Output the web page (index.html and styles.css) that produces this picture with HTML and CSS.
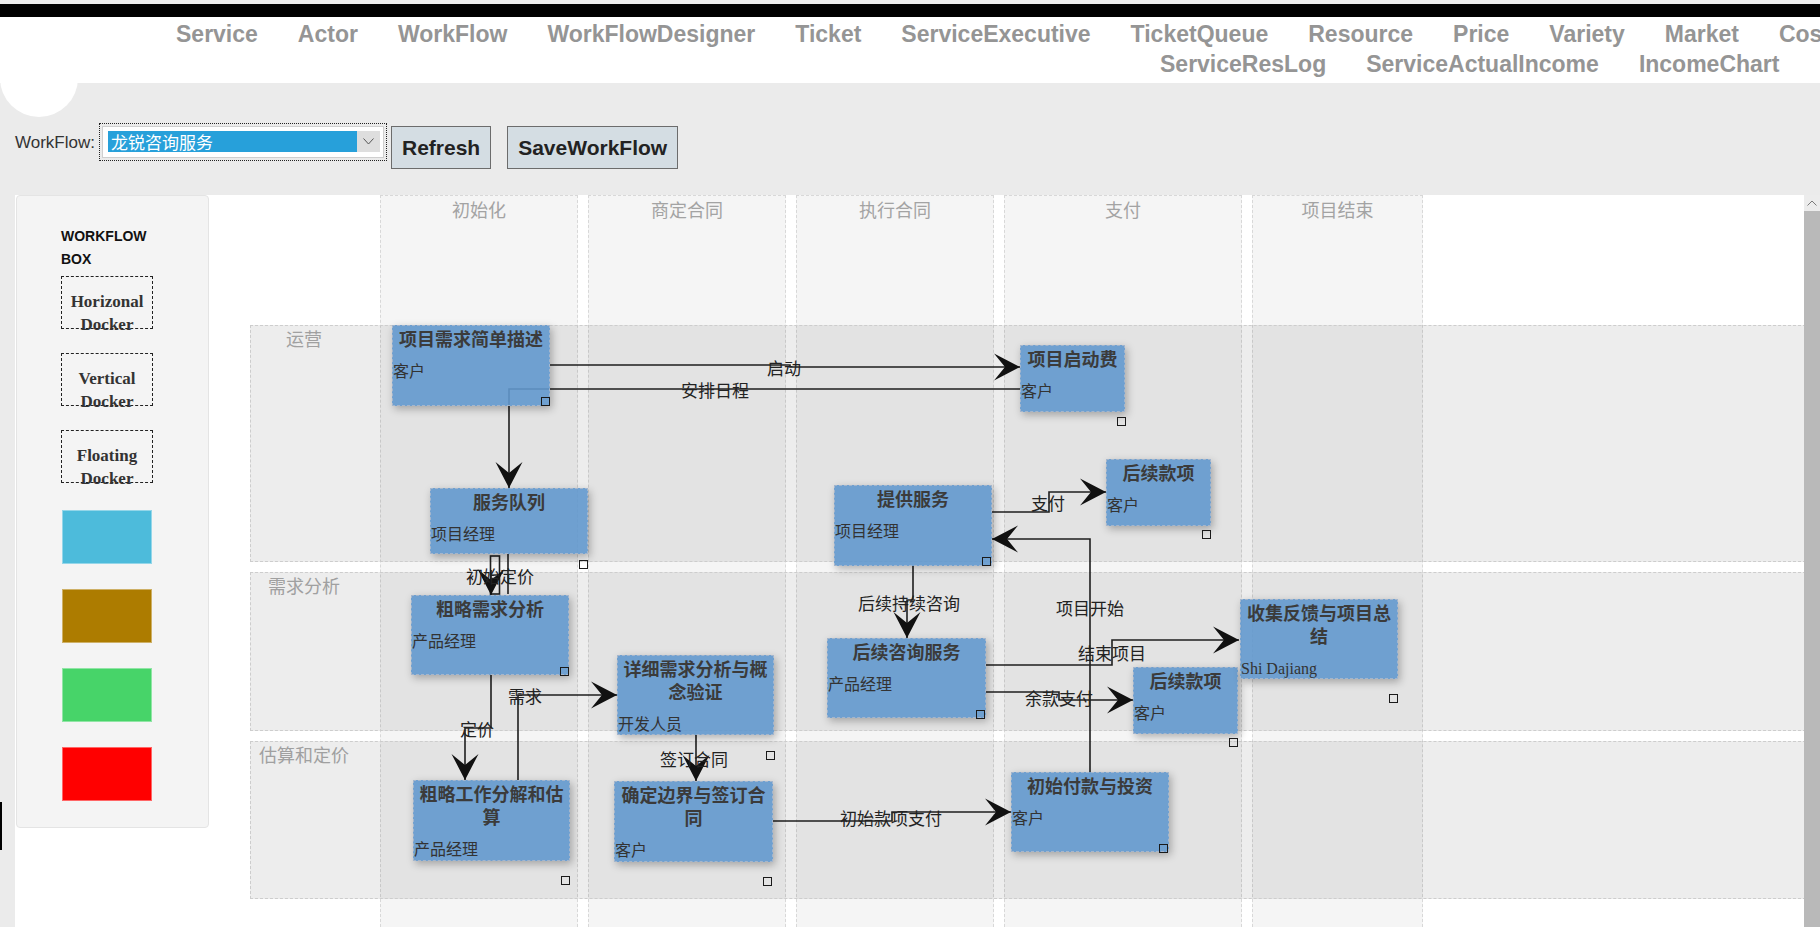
FILE: index.html
```html
<!DOCTYPE html>
<html lang="zh-CN">
<head>
<meta charset="utf-8">
<title>WorkFlowDesigner</title>
<link rel="stylesheet" href="styles.css">
</head>
<body>
<div class="topstrip"></div>
<div class="blackbar"></div>
<nav class="nav">
  <ul class="nav-row row1">
    <li>Service</li><li>Actor</li><li>WorkFlow</li><li>WorkFlowDesigner</li><li>Ticket</li><li>ServiceExecutive</li><li>TicketQueue</li><li>Resource</li><li>Price</li><li>Variety</li><li>Market</li><li>Cost</li><li>Report</li>
  </ul>
  <ul class="nav-row row2">
    <li>ServiceResLog</li><li>ServiceActualIncome</li><li>IncomeChart</li><li>Logout</li>
  </ul>
</nav>
<div class="avatar"></div>
<div class="toolbar">
  <label class="wf-label">WorkFlow:</label>
  <div class="select">
    <div class="select-inner">
      <span class="select-value">龙锐咨询服务</span>
      <span class="select-arrow"><svg width="11" height="7" viewBox="0 0 11 7"><polyline points="0.5,0.5 5.5,6 10.5,0.5" fill="none" stroke="#555" stroke-width="1"/></svg></span>
    </div>
  </div>
  <button class="btn btn-refresh">Refresh</button>
  <button class="btn btn-save">SaveWorkFlow</button>
</div>
<div class="main">
  <div class="left-strip"><div class="sliver"></div></div>
  <div class="workspace">
    <aside class="panel">
      <div class="panel-title">Workflow Box</div>
      <div class="dock dock-first">Horizonal Docker</div>
      <div class="dock">Vertical Docker</div>
      <div class="dock">Floating Docker</div>
      <div class="swatch swatch-first sw-blue"></div>
      <div class="swatch sw-brown"></div>
      <div class="swatch sw-green"></div>
      <div class="swatch sw-red"></div>
    </aside>
    <div class="canvas">
      <div class="columns">
        <div class="col col-a">初始化</div>
        <div class="col col-a">商定合同</div>
        <div class="col col-a">执行合同</div>
        <div class="col col-b">支付</div>
        <div class="col col-c">项目结束</div>
      </div>
      <div class="lanes">
        <div class="lane lane-1"><div class="lane-label">运营</div></div>
        <div class="lane lane-2"><div class="lane-label">需求分析</div></div>
        <div class="lane lane-3"><div class="lane-label">估算和定价</div></div>
      </div>
      <svg class="links" width="1594" height="732">
        <g class="ln">
          <polyline points="340,170 580,170 580,172 810,172"/>
          <polyline points="810,194 299,194 299,293"/>
          <polyline points="298,359 298,399"/>
          <rect x="280.5" y="361" width="9" height="38"/>
          <polyline points="281,375 281,400"/>
          <polyline points="281,480 281,533 255,533 255,585"/>
          <polyline points="308,585 308,500 407,500"/>
          <polyline points="486,540 486,586"/>
          <polyline points="563,626 682,626 682,617 801,617"/>
          <polyline points="782,317 839,317 839,297 896,297"/>
          <polyline points="880,577 880,344 782,344"/>
          <polyline points="703,371 703,405 697,405 697,443"/>
          <polyline points="776,470 902,470 902,445 1029,445"/>
          <polyline points="776,497 849,497 849,505 923,505"/>
        </g>
        <g class="ah">
          <path d="M0 0 L-26 -13.5 L-15 0 L-26 13.5 Z" transform="translate(810 172)"/>
          <path d="M0 0 L-26 -13.5 L-15 0 L-26 13.5 Z" transform="translate(299 293) rotate(90)"/>
          <path d="M0 0 L-26 -13.5 L-15 0 L-26 13.5 Z" transform="translate(281 400) rotate(90)"/>
          <path d="M0 0 L-26 -13.5 L-15 0 L-26 13.5 Z" transform="translate(255 585) rotate(90)"/>
          <path d="M0 0 L-26 -13.5 L-15 0 L-26 13.5 Z" transform="translate(407 500)"/>
          <path d="M0 0 L-26 -13.5 L-15 0 L-26 13.5 Z" transform="translate(486 586) rotate(90)"/>
          <path d="M0 0 L-26 -13.5 L-15 0 L-26 13.5 Z" transform="translate(801 617)"/>
          <path d="M0 0 L-26 -13.5 L-15 0 L-26 13.5 Z" transform="translate(896 297)"/>
          <path d="M0 0 L-26 -13.5 L-15 0 L-26 13.5 Z" transform="translate(782 344) rotate(180)"/>
          <path d="M0 0 L-26 -13.5 L-15 0 L-26 13.5 Z" transform="translate(697 443) rotate(90)"/>
          <path d="M0 0 L-26 -13.5 L-15 0 L-26 13.5 Z" transform="translate(1029 445)"/>
          <path d="M0 0 L-26 -13.5 L-15 0 L-26 13.5 Z" transform="translate(923 505)"/>
        </g>
        <g class="lbl">
          <text x="574" y="172">启动</text>
          <text x="505" y="194">安排日程</text>
          <text x="290" y="380">初始定价</text>
          <text x="267" y="533">定价</text>
          <text x="315" y="500">需求</text>
          <text x="484" y="563">签订合同</text>
          <text x="681" y="622">初始款项支付</text>
          <text x="838" y="307">支付</text>
          <text x="880" y="412">项目开始</text>
          <text x="699" y="407">后续持续咨询</text>
          <text x="902" y="457">结束项目</text>
          <text x="849" y="502">余款支付</text>
        </g>
      </svg>

      <div class="node" style="left:182px;top:130px;width:158px;height:81px"><div class="node-title">项目需求简单描述</div><div class="node-role">客户</div></div>
      <div class="node" style="left:810px;top:150px;width:105px;height:67px"><div class="node-title">项目启动费</div><div class="node-role">客户</div></div>
      <div class="node" style="left:220px;top:293px;width:158px;height:66px"><div class="node-title">服务队列</div><div class="node-role">项目经理</div></div>
      <div class="node" style="left:624px;top:290px;width:158px;height:81px"><div class="node-title">提供服务</div><div class="node-role">项目经理</div></div>
      <div class="node" style="left:896px;top:264px;width:105px;height:67px"><div class="node-title">后续款项</div><div class="node-role">客户</div></div>
      <div class="node" style="left:201px;top:400px;width:158px;height:80px"><div class="node-title">粗略需求分析</div><div class="node-role">产品经理</div></div>
      <div class="node" style="left:407px;top:460px;width:157px;height:80px"><div class="node-title">详细需求分析与概念验证</div><div class="node-role">开发人员</div></div>
      <div class="node" style="left:203px;top:585px;width:157px;height:81px"><div class="node-title">粗略工作分解和估算</div><div class="node-role">产品经理</div></div>
      <div class="node" style="left:404px;top:586px;width:159px;height:81px"><div class="node-title">确定边界与签订合同</div><div class="node-role">客户</div></div>
      <div class="node" style="left:617px;top:443px;width:159px;height:80px"><div class="node-title">后续咨询服务</div><div class="node-role">产品经理</div></div>
      <div class="node" style="left:923px;top:472px;width:105px;height:67px"><div class="node-title">后续款项</div><div class="node-role">客户</div></div>
      <div class="node" style="left:1030px;top:404px;width:158px;height:80px"><div class="node-title">收集反馈与项目总结</div><div class="node-role">Shi Dajiang</div></div>
      <div class="node" style="left:801px;top:577px;width:158px;height:80px"><div class="node-title">初始付款与投资</div><div class="node-role">客户</div></div>

      <div class="handle" style="left:331px;top:202px"></div>
      <div class="handle" style="left:907px;top:222px"></div>
      <div class="handle" style="left:369px;top:365px"></div>
      <div class="handle" style="left:772px;top:362px"></div>
      <div class="handle" style="left:992px;top:335px"></div>
      <div class="handle" style="left:350px;top:472px"></div>
      <div class="handle" style="left:556px;top:556px"></div>
      <div class="handle" style="left:351px;top:681px"></div>
      <div class="handle" style="left:553px;top:682px"></div>
      <div class="handle" style="left:766px;top:515px"></div>
      <div class="handle" style="left:1019px;top:543px"></div>
      <div class="handle" style="left:1179px;top:499px"></div>
      <div class="handle" style="left:949px;top:649px"></div>
    </div>
  </div>
  <div class="vscroll">
    <div class="vscroll-up"><svg width="10" height="6" viewBox="0 0 10 6"><polyline points="0.5,5.5 5,1 9.5,5.5" fill="none" stroke="#7a7a7a" stroke-width="1"/></svg></div>
    <div class="vscroll-thumb"></div>
  </div>
</div>
</body>
</html>
```
FILE: styles.css
```css
html, body {
  margin: 0;
  padding: 0;
  height: 927px;
  overflow: hidden;
  background: #ebebeb;
  font-family: "Liberation Sans", Arial, sans-serif;
}
body { position: relative; }

.topstrip { height: 4px; background: #ececec; }
.blackbar { height: 13px; background: #000; }

.nav {
  height: 66px;
  box-sizing: border-box;
  padding-top: 2px;
  background: #fff;
  overflow: hidden;
}
.nav-row {
  list-style: none;
  margin: 0;
  display: flex;
  gap: 40px;
  white-space: nowrap;
  font-weight: bold;
  font-size: 23px;
  line-height: 30px;
  color: #959595;
}
.row1 { padding-left: 176px; }
.row2 { padding-left: 1160px; }

.avatar {
  position: absolute;
  left: 0;
  top: 39px;
  width: 78px;
  height: 78px;
  border-radius: 50%;
  background: #fff;
}

.toolbar {
  height: 112px;
  box-sizing: border-box;
  padding: 40px 0 0 15px;
  display: flex;
  align-items: flex-start;
}
.wf-label {
  margin-top: 10px;
  font-size: 17px;
  line-height: 20px;
  color: #333;
}
.select {
  margin-left: 4px;
  width: 288px;
  height: 38px;
  box-sizing: border-box;
  border: 1px dotted #222;
  padding: 2px;
}
.select-inner {
  height: 100%;
  box-sizing: border-box;
  border: 1px solid #cfcfcf;
  background: #fff;
  padding: 4px 3px 0 5px;
  display: flex;
}
.select-value {
  width: 249px;
  height: 21px;
  background: #27a0da;
  color: #fff;
  font-family: "Noto Sans CJK SC", sans-serif;
  font-size: 17px;
  line-height: 21px;
  padding-left: 3px;
  box-sizing: border-box;
}
.select-arrow {
  width: 23px;
  height: 21px;
  background: #dedede;
  display: flex;
  align-items: center;
  justify-content: center;
}
.btn {
  margin-top: 3px;
  height: 43px;
  padding: 0 10px;
  background: #d4dde3;
  border: 1px solid #6c6c6c;
  border-radius: 0;
  font-family: "Liberation Sans", Arial, sans-serif;
  font-weight: bold;
  font-size: 21px;
  color: #222;
}
.btn-refresh { margin-left: 4px; }
.btn-save { margin-left: 16px; }

.main {
  display: flex;
  height: 732px;
}
.left-strip { width: 15px; flex: none; }
.sliver {
  margin-top: 607px;
  width: 2px;
  height: 48px;
  background: #000;
}
.workspace {
  flex: 1;
  display: flex;
  align-items: flex-start;
  background: #fff;
  overflow: hidden;
}

.panel {
  margin-left: 1px;
  width: 193px;
  height: 633px;
  flex: none;
  box-sizing: border-box;
  background: #f4f4f4;
  border: 1px solid #e4e4e4;
  border-radius: 4px;
  padding: 29px 0 0 44px;
}
.panel-title {
  width: 92px;
  font-weight: bold;
  font-size: 14px;
  line-height: 23px;
  text-transform: uppercase;
  color: #111;
}
.dock {
  width: 92px;
  height: 53px;
  box-sizing: border-box;
  margin-top: 24px;
  border: 1px dashed #222;
  padding-top: 13px;
  text-align: center;
  font-family: "Liberation Serif", "Times New Roman", serif;
  font-weight: bold;
  font-size: 17px;
  line-height: 23px;
  color: #333;
}
.dock-first { margin-top: 5px; }
.swatch {
  width: 90px;
  height: 54px;
  box-sizing: border-box;
  margin-top: 25px;
  margin-left: 1px;
  border: 1px solid rgba(255,255,255,0.4);
}
.swatch-first { margin-top: 27px; }
.sw-blue { background: #4dbbdb; }
.sw-brown { background: #ad7c00; }
.sw-green { background: #47d469; }
.sw-red { background: #ff0000; }

.canvas {
  position: relative;
  margin-left: 1px;
  flex: 1;
  height: 732px;
  overflow: hidden;
}
.columns {
  display: flex;
  gap: 10px;
  padding-left: 170px;
  height: 742px;
}
.col {
  box-sizing: border-box;
  background: #f5f5f5;
  border: 1px dashed #d8d8d8;
  text-align: center;
  font-family: "Noto Sans CJK SC", sans-serif;
  font-size: 18px;
  line-height: 26px;
  color: #a3a3a3;
}
.col-a { width: 198px; }
.col-b { width: 238px; }
.col-c { width: 171px; }

.lanes {
  position: absolute;
  top: 130px;
  left: 40px;
  right: -2px;
  display: flex;
  flex-direction: column;
  gap: 10px;
}
.lane {
  box-sizing: border-box;
  border: 1px dashed #cdcdcd;
  background: rgba(0,0,0,0.07);
}
.lane-1 { height: 237px; }
.lane-2 { height: 159px; }
.lane-3 { height: 158px; }
.lane-label {
  width: 106px;
  text-align: center;
  font-family: "Noto Sans CJK SC", sans-serif;
  font-size: 18px;
  line-height: 24px;
  color: #a0a0a0;
}

.links {
  position: absolute;
  left: 0;
  top: 0;
  overflow: visible;
}
.ln polyline, .ln rect {
  fill: none;
  stroke: #1f1f1f;
  stroke-width: 1.6;
}
.ah path { fill: #111; }
.lbl text {
  font-family: "Noto Sans CJK SC", sans-serif;
  font-size: 17px;
  fill: #222;
  text-anchor: middle;
  dominant-baseline: central;
}

.node {
  position: absolute;
  box-sizing: border-box;
  background: rgba(98,152,205,0.9);
  border: 1px dashed rgba(170,185,205,0.9);
  box-shadow: 2px 3px 8px rgba(0,0,0,0.28);
}
.node-title {
  padding-top: 1px;
  text-align: center;
  font-family: "Noto Sans CJK SC", sans-serif;
  font-weight: bold;
  font-size: 18px;
  line-height: 23px;
  color: #3b3b3b;
}
.node-role {
  margin-top: 11px;
  font-family: "Liberation Serif", "Noto Sans CJK SC", serif;
  font-size: 16px;
  line-height: 22px;
  color: #333;
  white-space: nowrap;
}
.handle {
  position: absolute;
  width: 9px;
  height: 9px;
  box-sizing: border-box;
  border: 1.5px solid #1a1a1a;
}

.vscroll {
  width: 16px;
  flex: none;
  display: flex;
  flex-direction: column;
}
.vscroll-up {
  height: 16px;
  background: #ececec;
  display: flex;
  align-items: center;
  justify-content: center;
}
.vscroll-thumb {
  flex: 1;
  background: #b9b9b9;
}
```
